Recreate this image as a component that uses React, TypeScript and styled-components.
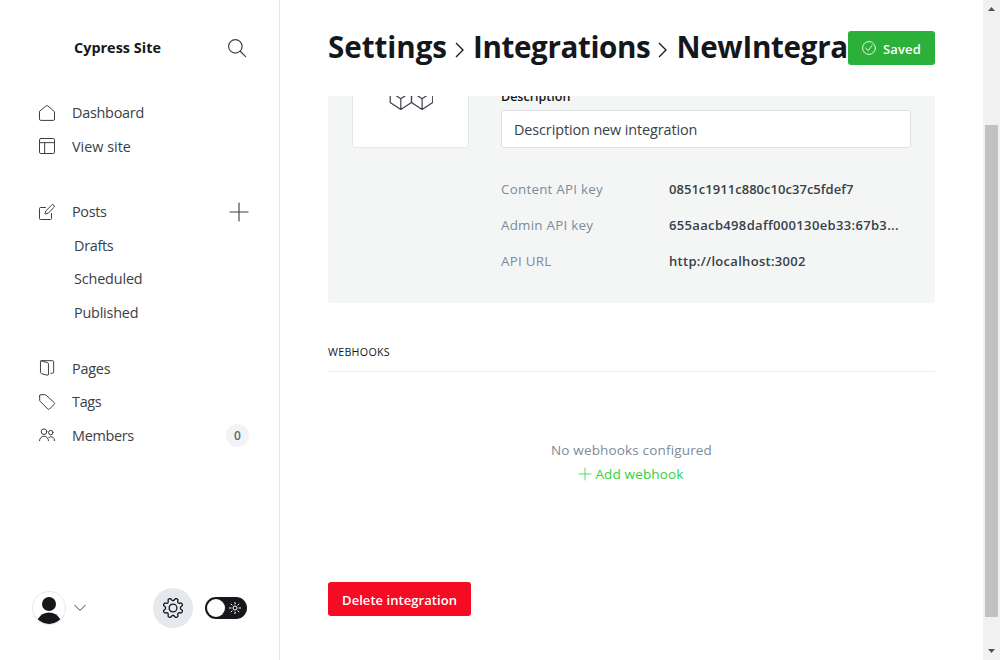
import React from "react";
import styled, { createGlobalStyle } from "styled-components";

const Global = createGlobalStyle`
  * { box-sizing: border-box; }
  body { margin: 0; background: #fff; color: #394047; overflow: hidden;
    font-family: "Open Sans", "Noto Sans", sans-serif; }
  svg { display: block; flex: none; }
`;

const Page = styled.div`display: flex; width: 1000px; height: 660px; overflow: hidden;`;

const Sidebar = styled.nav`
  display: flex; flex-direction: column; width: 280px; flex: none;
  border-right: 1px solid #e5e9ed;
`;
const SiteHeader = styled.header`
  display: flex; align-items: center; justify-content: space-between;
  height: 96px; padding: 0 33px 0 74px;
`;
const SiteName = styled.span`padding-bottom: 2px; font-size: 14.4px; font-weight: 700; color: #15171a; letter-spacing: 0.03px;`;
const NavGroup = styled.div<{ $gap: number }>`margin-bottom: ${(p) => p.$gap}px;`;
const NavRow = styled.a<{ $sub?: boolean }>`
  display: flex; align-items: center; height: 33.5px;
  padding: 0 31px 0 ${(p) => (p.$sub ? 74 : 39)}px;
  font-size: 14.4px; color: #394047; white-space: nowrap;
`;
const NavText = styled.span<{ $ls?: number }>`flex: none; letter-spacing: ${(p) => p.$ls ?? 0}px;`;
const NavIcon = styled.span`width: 33px; flex: none;`;
const Spacer = styled.span`flex: 1;`;
const Count = styled.span`
  width: 23px; height: 23px; border-radius: 50%; background: #f1f3f4; margin-right: -1px;
  display: flex; align-items: center; justify-content: center; font-size: 12px; font-weight: 600; color: #5d6771;
`;
const SideFooter = styled.footer`
  display: flex; align-items: center; height: 104px; margin-top: auto; padding: 0 32px;
`;
const Avatar = styled.span`
  width: 34px; height: 34px; border: 1px solid #e5e9ed; border-radius: 50%; overflow: hidden; margin-right: 8px;
`;
const Gear = styled.span`
  width: 40px; height: 40px; border-radius: 50%; background: #e5e9ed; margin-right: 12px;
  display: flex; align-items: center; justify-content: center;
`;
const Toggle = styled.span`
  width: 42px; height: 22px; border-radius: 11px; background: #15171a;
  display: flex; align-items: center; justify-content: space-between; padding: 0 6px 0 2px;
`;
const Knob = styled.span`width: 18px; height: 18px; border-radius: 50%; background: #fff;`;

const Main = styled.main`flex: 1; min-width: 0; padding: 0 48px; display: flex; flex-direction: column; align-items: stretch;`;
const TopBar = styled.header`height: 96px; flex: none; display: flex; align-items: center;`;
const Crumbs = styled.h1`
  margin: 0; padding-bottom: 2px; flex: 1; min-width: 0; overflow: hidden; display: flex; align-items: center;
  font-size: 29.6px; line-height: 40px; font-weight: 700; color: #15171a; white-space: nowrap;
`;
const Crumb = styled.span<{ $ls?: number }>`flex: none; letter-spacing: ${(p) => p.$ls ?? 0}px;`;
const CrumbSep = styled.span`width: 26px; flex: none; padding: 5px 0 0 8px;`;
const Button = styled.button<{ $bg: string; $w: number }>`
  width: ${(p) => p.$w}px; height: 34px; flex: none; padding: 0; border: 0; border-radius: 3px;
  background: ${(p) => p.$bg}; color: #fff; font: 600 13px/20px "Open Sans", sans-serif;
  display: flex; align-items: center; justify-content: center; gap: 7px; white-space: nowrap;
`;
const ButtonText = styled.span<{ $ls?: number }>`padding-top: 2px; letter-spacing: ${(p) => p.$ls ?? 0}px;`;
const Panel = styled.section`
  height: 207px; flex: none; overflow: hidden; background: #f4f6f6; border-radius: 0 0 3px 3px;
  padding: 0 24px; display: flex; gap: 32px;
`;
const IconCard = styled.div`
  width: 117px; height: 117px; margin-top: -65px; background: #fff; border: 1px solid #e5e9ed; border-radius: 3px;
  display: flex; align-items: center; justify-content: center;
`;
const Form = styled.div`flex: 1; min-width: 0; margin-top: -9px;`;
const FieldLabel = styled.label`display: block; height: 23px; line-height: 20px; font-size: 12.5px; font-weight: 600; color: #15171a;`;
const Field = styled.div`
  height: 38px; padding: 0 12px; border: 1px solid #dddfe2; border-radius: 3px; background: #fff;
  display: flex; align-items: center; font-size: 14.4px; color: #394047;
`;
const Keys = styled.dl`margin: 23px 0 0;`;
const KeyRow = styled.div`display: flex; align-items: center; height: 36px; white-space: nowrap;`;
const KeyName = styled.dt`width: 168px; font-size: 13.4px; letter-spacing: 0.23px; color: #7c8b9a;`;
const KeyValue = styled.dd<{ $ls: number }>`margin: 0; font-size: 13px; font-weight: 600; color: #394047; letter-spacing: ${(p) => p.$ls}px;`;
const SectionTitle = styled.h2`
  margin: 40px 0 0; height: 29px; flex: none; border-bottom: 1px solid #ebeef0;
  font-size: 10.7px; line-height: 18px; font-weight: 400; letter-spacing: 0.3px; color: #15171a;
`;
const Empty = styled.div`
  margin-top: 66px; height: 144px; flex: none; display: flex; flex-direction: column; align-items: center;
  font-size: 13.5px; line-height: 24px; letter-spacing: 0.16px; color: #7c8b9a;
`;
const AddLink = styled.a`display: flex; align-items: center; gap: 4px; color: #30cf43;`;

const Scrollbar = styled.div`
  width: 17px; flex: none; background: #f1f1f1; display: flex; flex-direction: column;
  justify-content: space-between; align-items: center; padding: 7px 0;
`;
const Thumb = styled.div`width: 13px; height: 492px; margin: 114px 0 auto; background: #c1c1c1;`;

const Svg = ({ s = 16, sw = 1.5, children }: { s?: number; sw?: number; children: React.ReactNode }) => (
  <svg width={s} height={s} viewBox="0 0 24 24" fill="none" stroke="currentColor" strokeWidth={sw} strokeLinecap="round" strokeLinejoin="round" overflow="visible">{children}</svg>
);

const icons = {
  home: <path d="M.75 10v11.2a1.9 1.9 0 0 0 1.9 1.9h18.7a1.9 1.9 0 0 0 1.9-1.9V10L13.2 1.3a1.9 1.9 0 0 0-2.4 0z" />,
  site: <><rect x=".75" y=".75" width="22.5" height="22.5" rx="2" /><path d="M.75 7h22.5M8.5 7v16" /></>,
  posts: <><path d="M18.75 14.25v7.5a1.5 1.5 0 0 1-1.5 1.5h-15a1.5 1.5 0 0 1-1.5-1.5v-15a1.5 1.5 0 0 1 1.5-1.5h7.5" /><path d="M13.3 14 9 15l.9-4.3 9.1-9a2.3 2.3 0 0 1 3.3 3.3z" /></>,
  pages: <><path d="M3 1.2 12.600 4q1.600.5 1.600 2v15q0 2.300-2 1.800L4 20.600q-1.800-.6-1.800-2.200V2.600Q2.200 1 3.800 1h16.400q1.800 0 1.800 1.800v15.400q0 1.700-1.800 1.700h-2.500" /></>,
  tag: <path d="M1 2.5V9.4a1.8 1.8 0 0 0 .5 1.3l11.8 11.8a1.8 1.8 0 0 0 2.5 0l7-7a1.8 1.8 0 0 0 0-2.5L10.5 1.5A2 2 0 0 0 9.2 1H2.5A1.5 1.5 0 0 0 1 2.5z" />,
  members: <><circle cx="7.5" cy="7" r="4.2" /><circle cx="17.7" cy="8.4" r="3.3" /><path d="M.75 20.5a6.750 6.750 0 0 1 13.5 0M14.8 15.5a5.4 5.4 0 0 1 8.450 5" /></>,
};

// Outline of an eight-toothed cog with rounded teeth, centred in a 22px box.
const cogPath =
  Array.from({ length: 160 }, (_, i) => {
    const a = (i / 160) * Math.PI * 2;
    const r = 8.7 + 1.3 * Math.tanh(-1.8 * Math.cos(8 * a));
    return `${i ? "L" : "M"}${(11 + r * Math.cos(a)).toFixed(2)} ${(11 + r * Math.sin(a)).toFixed(2)}`;
  }).join("") + "z";

const Row = ({ icon, text, ls, sub, children }: { icon?: keyof typeof icons; text: string; ls?: number; sub?: boolean; children?: React.ReactNode }) => (
  <NavRow $sub={sub}>
    {icon && <NavIcon><Svg>{icons[icon]}</Svg></NavIcon>}
    <NavText $ls={ls}>{text}</NavText>
    <Spacer />
    {children}
  </NavRow>
);

const Sep = () => (
  <CrumbSep>
    <svg width="10" height="16" viewBox="0 0 10 16" fill="none" stroke="#15171a" strokeWidth="1.3"><path d="M1 1l7 7-7 7" /></svg>
  </CrumbSep>
);

const keys = [
  { name: "Content API key", value: "0851c1911c880c10c37c5fdef7", ls: 0.03 },
  { name: "Admin API key", value: "655aacb498daff000130eb33:67b3...", ls: 0.34 },
  { name: "API URL", value: "http://localhost:3002", ls: 0.3 },
];

export default function App() {
  return (
    <Page>
      <Global />
      <Sidebar>
        <SiteHeader>
          <SiteName>Cypress Site</SiteName>
          <Svg s={18} sw={1.6}><circle cx="9.8" cy="9.8" r="9" /><path d="M16.300 16.300L23.500 23.500" /></Svg>
        </SiteHeader>
        <NavGroup $gap={32}>
          <Row icon="home" text="Dashboard" ls={-0.25} />
          <Row icon="site" text="View site" />
        </NavGroup>
        <NavGroup $gap={22.7}>
          <Row icon="posts" text="Posts" ls={-0.3}><Svg s={18}><path d="M12 0v24M0 12h24" /></Svg></Row>
          <Row sub text="Drafts" ls={-0.3} />
          <Row sub text="Scheduled" ls={-0.15} />
          <Row sub text="Published" ls={-0.2} />
        </NavGroup>
        <NavGroup $gap={0}>
          <Row icon="pages" text="Pages" ls={-0.2} />
          <Row icon="tag" text="Tags" ls={-0.3} />
          <Row icon="members" text="Members" ls={-0.3}><Count>0</Count></Row>
        </NavGroup>
        <SideFooter>
          <Avatar>
            <svg width="32" height="32" viewBox="0 0 32 32" fill="#15171a"><circle cx="16" cy="12" r="7" /><path d="M4.500 27.500Q8.500 20.500 16 20.500T27.500 27.500Q22 32 16 32T4.500 27.500z" /></svg>
          </Avatar>
          <svg width="12" height="8" viewBox="0 0 12 8" fill="none" stroke="#394047"><path d="M.5 1L6 6.5 11.500 1" /></svg>
          <Spacer />
          <Gear>
            <svg width="22" height="22" viewBox="0 0 22 22" fill="none" stroke="#15171a" strokeWidth="1.3" strokeLinejoin="round"><circle cx="11" cy="11" r="3.900" /><path d={cogPath} /></svg>
          </Gear>
          <Toggle><Knob /><svg width="12" height="12" viewBox="0 0 12 12" fill="none" stroke="#fff"><circle cx="6" cy="6" r="2" /><path d="M6 0v2.500M6 9.500V12M0 6h2.500M9.500 6H12M1.800 1.800l1.600 1.600M8.600 8.600l1.600 1.600M1.800 10.200l1.600-1.600M8.600 3.400l1.600-1.600" /></svg></Toggle>
        </SideFooter>
      </Sidebar>
      <Main>
        <TopBar>
          <Crumbs>
            <Crumb $ls={-0.05}>Settings</Crumb><Sep />
            <Crumb $ls={-0.38}>Integrations</Crumb><Sep />
            <Crumb $ls={-0.3}>NewIntegration</Crumb>
          </Crumbs>
          <Button $bg="#2bb13a" $w={87}>
            <Svg s={14}><circle cx="12" cy="12" r="11" /><path d="M6.500 12l4 4.500 7-9" /></Svg>
            <ButtonText $ls={0.2}>Saved</ButtonText>
          </Button>
        </TopBar>
        <Panel>
          <IconCard>
            <svg width="44" height="44" viewBox="0 0 44 44" fill="none" stroke="#394047" strokeWidth="1.200" strokeLinejoin="round">
              <path d="M1.200 23.700l10.600-7 10.700 7v10.800l-10.700 7-10.600-7zM11.800 41.500V30.700M1.200 23.700l10.600 7 10.700-7" />
              <path d="M22.500 23.700l10.600-7 10.600 7v10.800l-10.600 7-10.600-7zM33.100 41.500V30.700M22.500 23.700l10.600 7 10.600-7" />
              <path d="M11.800 16.700V6.500l10.700-6 10.600 6v10.200M22.500 23.700V12.700M11.800 6.500l10.700 6.200 10.600-6.200" />
            </svg>
          </IconCard>
          <Form>
            <FieldLabel>Description</FieldLabel>
            <Field><NavText $ls={-0.1}>Description new integration</NavText></Field>
            <Keys>
              {keys.map((k) => (
                <KeyRow key={k.name}><KeyName>{k.name}</KeyName><KeyValue $ls={k.ls}>{k.value}</KeyValue></KeyRow>
              ))}
            </Keys>
          </Form>
        </Panel>
        <SectionTitle>WEBHOOKS</SectionTitle>
        <Empty>
          <span>No webhooks configured</span>
          <AddLink><Svg s={12}><path d="M12 0v24M0 12h24" /></Svg><span>Add webhook</span></AddLink>
        </Empty>
        <Button $bg="#f50b23" $w={143}><ButtonText $ls={0.05}>Delete integration</ButtonText></Button>
      </Main>
      <Scrollbar>
        <svg width="7" height="4" viewBox="0 0 7 4" fill="#505050"><path d="M0 4L3.500 0 7 4z" /></svg>
        <Thumb />
        <svg width="7" height="4" viewBox="0 0 7 4" fill="#505050"><path d="M0 0L3.500 4 7 0z" /></svg>
      </Scrollbar>
    </Page>
  );
}
